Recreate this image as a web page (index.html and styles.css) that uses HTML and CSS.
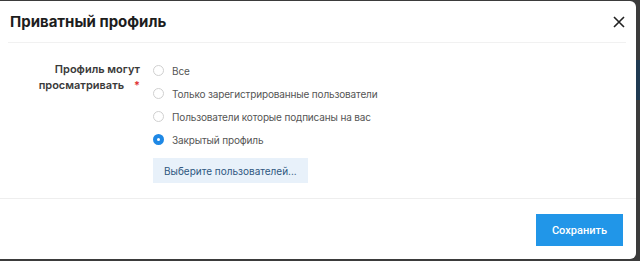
FILE: index.html
```html
<!DOCTYPE html>
<html lang="ru">

<head>
    <meta charset="UTF-8">
    <meta name="viewport" content="width=device-width, initial-scale=1.0">
    <title>Приватный профиль</title>
    <link rel="stylesheet" href="styles.css">
</head>

<body>
    <div class="modal">
        <div class="modal-header">
            <h1 class="modal-title">Приватный профиль</h1>
            <button class="close" type="button">
                <svg width="12" height="12" viewBox="0 0 12 12">
                    <path d="M1 1 L11 11 M11 1 L1 11" stroke="#222" stroke-width="1.6" fill="none"/>
                </svg>
            </button>
        </div>

        <form class="modal-body">
            <div class="field">
                <label class="field-label">Профиль могут просматривать</label>
                <div class="field-control">
                    <label class="radio">
                        <input type="radio" name="privacy">
                        <span>Все</span>
                    </label>
                    <label class="radio">
                        <input type="radio" name="privacy">
                        <span>Только зарегистрированные пользователи</span>
                    </label>
                    <label class="radio">
                        <input type="radio" name="privacy">
                        <span>Пользователи которые подписаны на вас</span>
                    </label>
                    <label class="radio">
                        <input type="radio" name="privacy" checked>
                        <span>Закрытый профиль</span>
                    </label>
                    <button class="pick" type="button">Выберите пользователей...</button>
                </div>
            </div>
        </form>

        <div class="modal-footer">
            <button class="save" type="submit">Сохранить</button>
        </div>
    </div>
</body>

</html>
```

FILE: styles.css
```css
body {
    margin: 0;
    background: linear-gradient(#3b3b3b 60px, #1f3a52 60px, #1f3a52 100px, #3b3b3b 100px);
    font-family: Inter, "Noto Sans", sans-serif;
    height: 261px;
    overflow: hidden;
}

.modal {
    width: 636px;
    height: 258px;
    margin-top: 1px;
    background-color: #fff;
    border-radius: 0 6px 6px 0;
    display: flex;
    flex-direction: column;
}

.modal-header {
    display: flex;
    justify-content: space-between;
    align-items: center;
    height: 41px;
    margin: 0 10px 0 8px;
    padding-left: 2px;
    border-bottom: 1px solid #f1f1f1;
}

.modal-title {
    margin: 0;
    font-size: 15px;
    font-weight: 700;
    color: #1d1d1d;
}

.close {
    background: none;
    border: none;
    padding: 0;
    width: 12px;
    height: 12px;
    margin-right: 1px;
    cursor: pointer;
}

.close svg {
    display: block;
}

.modal-body {
    padding: 16px 0 15px 0;
    border-bottom: 1px solid #eeeeee;
}

.field {
    display: flex;
    gap: 13px;
}

.field-label {
    width: 140px;
    text-align: right;
    font-size: 11px;
    font-weight: 600;
    line-height: 16px;
    color: #3a3a3a;
    padding-top: 2px;
}

.field-label::after {
    content: "*";
    color: #e03131;
    margin-left: 10px;
}

.field-control {
    display: flex;
    flex-direction: column;
}

.radio {
    display: flex;
    align-items: center;
    gap: 8px;
    height: 23px;
    font-size: 10px;
    letter-spacing: -0.15px;
    color: #555555;
}

.radio input {
    appearance: none;
    width: 11px;
    height: 11px;
    margin: 0;
    border: 1px solid #d0d0d0;
    border-radius: 50%;
    background-color: #fff;
}

.radio input:checked {
    border: 4px solid #1e88e5;
}

.pick {
    align-self: flex-start;
    margin-top: 7px;
    height: 25px;
    padding: 0 11px;
    background-color: #e8f1fa;
    color: #2e5780;
    border: none;
    font-family: inherit;
    font-size: 10px;
    cursor: pointer;
}

.modal-footer {
    display: flex;
    justify-content: flex-end;
    padding: 15px 13px 0 0;
}

.save {
    height: 32px;
    padding: 0 16px;
    background-color: #2196e8;
    color: #fff;
    border: none;
    font-family: Roboto, sans-serif;
    font-size: 11px;
    font-weight: 500;
    cursor: pointer;
}
```
